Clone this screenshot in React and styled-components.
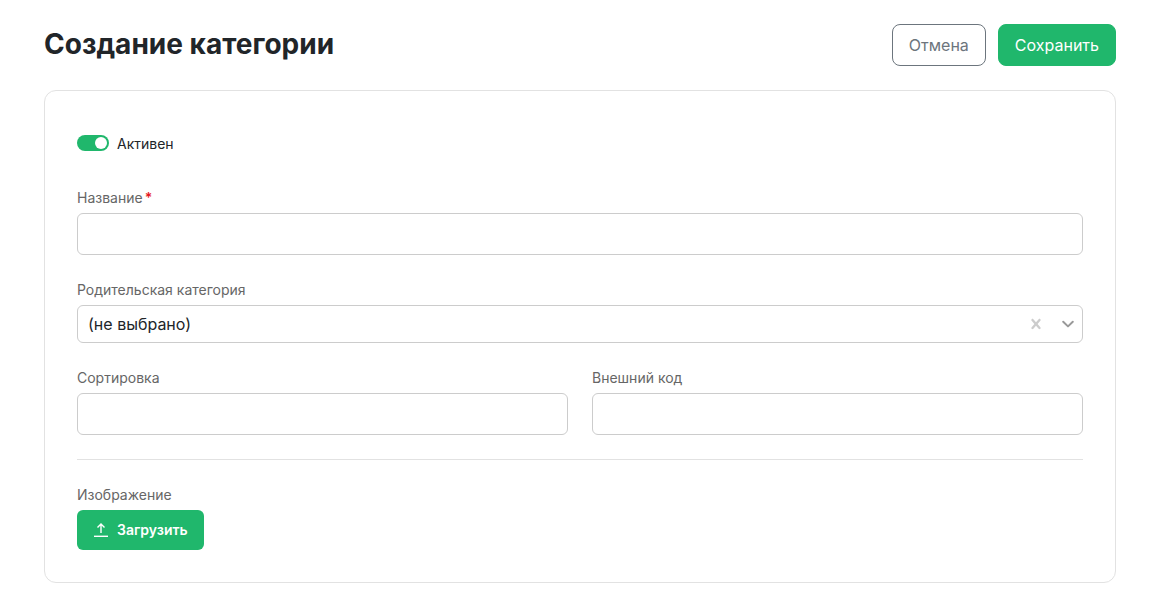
import React, { useState } from 'react';
import styled, { createGlobalStyle, ThemeProvider } from 'styled-components';

const theme = {
  colors: {
    primary: '#20b76c',
    text: '#212529',
    label: '#666666',
    gray: '#6c757d',
    border: '#cccccc',
    line: '#e2e2e2',
    danger: '#e6171e',
    white: '#ffffff',
  },
};

const App = () => {
  const [active, setActive] = useState(true);
  const [name, setName] = useState('');
  const [parent, setParent] = useState('none');
  const [sort, setSort] = useState('');
  const [code, setCode] = useState('');

  return (
    <ThemeProvider theme={theme}>
      <GlobalStyle />
      <Page>
        <Header>
          <Title>Создание категории</Title>
          <Actions>
            <Button type="button">Отмена</Button>
            <Button type="submit" form="category-form" $primary>Сохранить</Button>
          </Actions>
        </Header>
        <Card id="category-form" onSubmit={(e) => e.preventDefault()}>
          <SwitchLabel>
            <Switch
              type="checkbox"
              role="switch"
              checked={active}
              onChange={(e) => setActive(e.target.checked)}
            />
            Активен
          </SwitchLabel>
          <Field>
            <Label htmlFor="name">Название<Required>*</Required></Label>
            <Input id="name" value={name} onChange={(e) => setName(e.target.value)} />
          </Field>
          <Field>
            <Label htmlFor="parent">Родительская категория</Label>
            <SelectWrap>
              <Select id="parent" value={parent} onChange={(e) => setParent(e.target.value)}>
                <option value="none">(не выбрано)</option>
              </Select>
              <Indicators>
                <ClearButton type="button" aria-label="Очистить" onClick={() => setParent('none')}>
                  <CrossIcon />
                </ClearButton>
                <ChevronIcon />
              </Indicators>
            </SelectWrap>
          </Field>
          <Row>
            <Field>
              <Label htmlFor="sort">Сортировка</Label>
              <Input id="sort" value={sort} onChange={(e) => setSort(e.target.value)} />
            </Field>
            <Field>
              <Label htmlFor="code">Внешний код</Label>
              <Input id="code" value={code} onChange={(e) => setCode(e.target.value)} />
            </Field>
          </Row>
          <Divider />
          <Field>
            <Label as="span" id="image-label">Изображение</Label>
            <UploadButton type="button" aria-describedby="image-label">
              <UploadIcon />
              Загрузить
            </UploadButton>
          </Field>
        </Card>
      </Page>
    </ThemeProvider>
  );
};

const CrossIcon = () => (
  <svg width="20" height="20" viewBox="0 0 20 20" fill="currentColor" aria-hidden="true">
    <path d="M14.348 14.849c-0.469 0.469-1.229 0.469-1.697 0l-2.651-3.030-2.651 3.029c-0.469 0.469-1.229 0.469-1.697 0-0.469-0.469-0.469-1.229 0-1.697l2.758-3.15-2.759-3.152c-0.469-0.469-0.469-1.228 0-1.697s1.228-0.469 1.697 0l2.652 3.031 2.651-3.031c0.469-0.469 1.228-0.469 1.697 0s0.469 1.229 0 1.697l-2.758 3.152 2.758 3.15c0.469 0.469 0.469 1.229 0 1.698z" />
  </svg>
);

const ChevronIcon = () => (
  <svg width="20" height="20" viewBox="0 0 20 20" fill="none" aria-hidden="true">
    <path d="M5.2 7.8l4.8 4.6 4.8-4.6" stroke="#999999" strokeWidth="2" strokeLinecap="round" strokeLinejoin="round" />
  </svg>
);

const UploadIcon = () => (
  <svg width="16" height="16" viewBox="0 0 16 16" fill="none" stroke="currentColor" aria-hidden="true">
    <path d="M8 11V2.5M4.5 5.5L8 2l3.5 3.5" strokeWidth="1.4" />
    <path d="M1 14.3h14" strokeWidth="1.4" />
  </svg>
);

const GlobalStyle = createGlobalStyle`
  * {
    box-sizing: border-box;
  }

  body {
    margin: 0;
    background-color: ${theme.colors.white};
    color: ${theme.colors.text};
    font-family: Inter, "Liberation Sans", sans-serif;
    font-size: 16px;
  }

  button, input, select {
    font: inherit;
  }
`;

const Page = styled.main`
  padding: 24px 44px;
`;

const Header = styled.header`
  display: flex;
  justify-content: space-between;
  align-items: flex-start;
  margin-bottom: 24px;
`;

const Title = styled.h1`
  margin: 0;
  font-size: 28px;
  font-weight: 700;
  line-height: 40px;
`;

const Actions = styled.div`
  display: flex;
  gap: 12px;
`;

const Button = styled.button`
  height: 42px;
  padding: 0 16px;
  border: 1px solid ${({ theme, $primary }) => ($primary ? theme.colors.primary : theme.colors.gray)};
  border-radius: 8px;
  background-color: ${({ theme, $primary }) => ($primary ? theme.colors.primary : theme.colors.white)};
  color: ${({ theme, $primary }) => ($primary ? theme.colors.white : theme.colors.gray)};
  cursor: pointer;
`;

const Card = styled.form`
  display: flex;
  flex-direction: column;
  gap: 24px;
  padding: 32px;
  border: 1px solid ${({ theme }) => theme.colors.line};
  border-radius: 12px;
`;

const SwitchLabel = styled.label`
  display: flex;
  align-items: center;
  align-self: flex-start;
  gap: 8px;
  height: 40px;
  font-size: 14px;
  cursor: pointer;
`;

const Switch = styled.input`
  appearance: none;
  display: flex;
  width: 32px;
  height: 16px;
  margin: 0;
  padding: 2px;
  border-radius: 8px;
  background-color: ${({ theme }) => theme.colors.border};
  cursor: pointer;

  &::before {
    content: '';
    width: 12px;
    height: 12px;
    border-radius: 50%;
    background-color: ${({ theme }) => theme.colors.white};
  }

  &:checked {
    justify-content: flex-end;
    background-color: ${({ theme }) => theme.colors.primary};
  }
`;

const Field = styled.div`
  display: flex;
  flex-direction: column;
  gap: 4px;
`;

const Row = styled.div`
  display: grid;
  grid-template-columns: 1fr 1fr;
  gap: 24px;
`;

const Label = styled.label`
  color: ${({ theme }) => theme.colors.label};
  font-size: 14px;
  line-height: 22px;
`;

const Required = styled.span`
  margin-left: 2px;
  color: ${({ theme }) => theme.colors.danger};
  font-weight: 600;
`;

const Input = styled.input`
  width: 100%;
  height: 42px;
  padding: 0 12px;
  border: 1px solid ${({ theme }) => theme.colors.border};
  border-radius: 6px;
  background-color: ${({ theme }) => theme.colors.white};
`;

const SelectWrap = styled.div`
  position: relative;
`;

const Select = styled.select`
  appearance: none;
  display: block;
  width: 100%;
  height: 38px;
  padding: 0 80px 0 10px;
  border: 1px solid ${({ theme }) => theme.colors.border};
  border-radius: 6px;
  background-color: ${({ theme }) => theme.colors.white};
  color: ${({ theme }) => theme.colors.text};
`;

const Indicators = styled.div`
  position: absolute;
  top: 0;
  right: 5px;
  bottom: 0;
  display: flex;
  align-items: center;
  gap: 12px;
  pointer-events: none;
`;

const ClearButton = styled.button`
  display: flex;
  padding: 0;
  border: none;
  background: none;
  color: ${({ theme }) => theme.colors.border};
  cursor: pointer;
  pointer-events: auto;
`;

const Divider = styled.hr`
  width: 100%;
  margin: 0;
  border: none;
  border-top: 1px solid ${({ theme }) => theme.colors.line};
`;

const UploadButton = styled.button`
  display: flex;
  align-items: center;
  align-self: flex-start;
  gap: 8px;
  height: 40px;
  padding: 0 16px;
  border: none;
  border-radius: 6px;
  background-color: ${({ theme }) => theme.colors.primary};
  color: ${({ theme }) => theme.colors.white};
  font-size: 14px;
  font-weight: 600;
  line-height: 20px;
  cursor: pointer;
`;

export default App;
